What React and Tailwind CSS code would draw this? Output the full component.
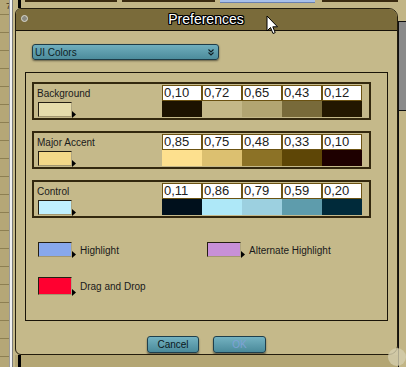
const rows = [
  {
    label: "Background",
    swatch: "bg-[#e6dcab]",
    values: [
      ["0,10", "bg-[#1c1200]"],
      ["0,72", "bg-[#c4b888]"],
      ["0,65", "bg-[#b2a572]"],
      ["0,43", "bg-[#786a3a]"],
      ["0,12", "bg-[#231700]"],
    ],
  },
  {
    label: "Major Accent",
    swatch: "bg-[#f3d888]",
    values: [
      ["0,85", "bg-[#fde08e]"],
      ["0,75", "bg-[#dcc070]"],
      ["0,48", "bg-[#8c7226]"],
      ["0,33", "bg-[#5e4606]"],
      ["0,10", "bg-[#1e0000]"],
    ],
  },
  {
    label: "Control",
    swatch: "bg-[#c0f0ff]",
    values: [
      ["0,11", "bg-[#00101c]"],
      ["0,86", "bg-[#aee8f8]"],
      ["0,79", "bg-[#9cd0e0]"],
      ["0,59", "bg-[#5e9cac]"],
      ["0,20", "bg-[#002a3a]"],
    ],
  },
];

const Arrow = () => (
  <svg width="4" height="7" viewBox="0 0 4 7" className="self-end -mb-[1px] shrink-0">
    <path d="M0 0 L4 3.5 L0 7 Z" fill="#000" />
  </svg>
);

const Swatch = ({ color, h = "h-[15px]" }) => (
  <div className="flex">
    <div
      className={`w-[34px] ${h} ${color} border-t border-l border-t-[#241e12] border-l-[#241e12] border-b border-r border-b-[#a39770] border-r-[#b0a680]`}
    />
    <Arrow />
  </div>
);

const ColorRow = ({ row }) => (
  <div className="w-[339px] h-[38px] border-2 border-[#33280e] flex">
    <div className="w-[128px] pl-[3px] pt-[4px]">
      <div className="text-[10px] leading-[12px] text-[#1a1a1a]">{row.label}</div>
      <div className="mt-[2px] ml-[1px]">
        <Swatch color={row.swatch} />
      </div>
    </div>
    <div className="pt-[1px] flex">
      {row.values.map(([v, c], i) => (
        <div key={i} className="w-[40px]">
          <div className="h-[16px] bg-white border border-[#6b5212] text-[13px] leading-[14px] pl-[1px] text-[#202020]">
            {v}
          </div>
          <div className={`h-[16px] ${c}`} />
        </div>
      ))}
    </div>
  </div>
);

const SwatchItem = ({ color, label, h }) => (
  <div className="flex items-center">
    <Swatch color={color} h={h} />
    <span className="ml-[4px] text-[10px] leading-[12px] text-[#1a1a1a] mt-[2px]">{label}</span>
  </div>
);

const Button = ({ children, w, text }) => (
  <button
    className={`${w} h-[17px] rounded-[3px] border border-[#1f3f4c] bg-gradient-to-b from-[#74b2c1] to-[#4a8a9a] shadow-[0_2px_2px_rgba(0,0,0,0.45)] text-[10px] leading-[15px] ${text}`}
  >
    {children}
  </button>
);

export default function App() {
  return (
    <div
      className="relative w-[406px] h-[367px] overflow-hidden bg-[#c2b586] flex"
      style={{ fontFamily: '"Liberation Sans", Arial, sans-serif' }}
    >
      {/* left background strip */}
      <div className="flex h-full">
        <div className="w-[9px] bg-[#b5a777] flex flex-col">
          <div className="h-[15px] shrink-0 border-b border-[#8d7f52] text-[9px] leading-[12px] text-[#3a3020] text-right -mr-[2px]">
            7
          </div>
          {Array.from({ length: 20 }).map((_, i) => (
            <div key={i} className="h-[18px] shrink-0 border-b border-[#8d7f52]" />
          ))}
        </div>
        <div className="w-[1px] bg-[#9a9a9a]" />
        <div className="w-[2px] bg-[#f2f2f2]" />
        <div className="w-[1px] bg-[#7a7a7a]" />
        <div className="w-[2px] bg-[#c4b888]" />
      </div>

      {/* middle column */}
      <div className="w-[383px] flex flex-col">
        <div className="h-[8px] flex relative bg-[#c2b586]">
          <div className="w-[3px] ml-[3px] bg-black" />
          <div className="w-[92px] ml-[4px] h-[2px] bg-[#3a2a10]" />
          <div className="w-[93px] ml-[5px] h-[2px] bg-[#3a2a10]" />
          <div className="w-[95px] ml-[5px] h-[3px] bg-[#a8c0ea] border-b border-[#6a80b0]" />
          <div className="w-[76px] ml-[7px] h-[2px] bg-[#3a2a10]" />
        </div>

        {/* dialog */}
        <div className="h-[347px] border border-[#231c0c] rounded-tl-[6px] rounded-tr-[9px] rounded-bl-[6px] rounded-br-[9px] bg-[#c5b98a] overflow-hidden flex flex-col">
          <div className="h-[22px] bg-[#7a6b3a] border-b border-[#161108] relative flex items-center justify-center">
            <div className="absolute left-[5px] top-[6px] w-[7px] h-[7px] rounded-full border-[1.5px] border-[#d8d8d0] bg-[#8a8a80]" />
            <span className="text-[14px] leading-[16px] text-white [text-shadow:-1px_0_0_#000,1px_0_0_#000,0_-1px_0_#000,0_1px_0_#000,1px_1px_0_#000,-1px_-1px_0_#000,1px_-1px_0_#000,-1px_1px_0_#000] -mt-[1px] ml-[-1px]">
              Preferences
            </span>
          </div>

          <div className="px-[9px]">
            <div className="mt-[13px] ml-[7px] w-[187px] h-[16px] rounded-[3px] border border-[#1e3c48] bg-gradient-to-b from-[#70aebd] to-[#4c8c9c] shadow-[0_1px_2px_rgba(0,0,0,0.5)] flex items-center justify-between pl-[2px] pr-[4px]">
              <span className="text-[10px] leading-[12px] text-[#0e1e24] mt-[2px]">UI Colors</span>
              <svg width="6" height="7" viewBox="0 0 6 7">
                <path d="M0.5 0.5 L3 3 L5.5 0.5 M0.5 3.5 L3 6 L5.5 3.5" stroke="#0e1e24" strokeWidth="1.1" fill="none" />
              </svg>
            </div>

            <div className="mt-[12px] w-[363px] h-[249px] border border-[#1a1408] pt-[9px] pl-[6px]">
              <div className="flex flex-col gap-[11px]">
                {rows.map((r) => (
                  <ColorRow key={r.label} row={r} />
                ))}
              </div>
              <div className="pl-[6px] mt-[24px] grid grid-cols-[169px_1fr]">
                <SwatchItem color="bg-[#88a8ec]" label="Highlight" />
                <SwatchItem color="bg-[#c890d8]" label="Alternate Highlight" />
              </div>
              <div className="pl-[6px] mt-[20px]">
                <SwatchItem color="bg-[#ff0030]" label="Drag and Drop" h="h-[18px]" />
              </div>
            </div>

            <div className="mt-[15px] flex justify-center gap-[14px]">
              <Button w="w-[52px]" text="text-[#0a1820]">Cancel</Button>
              <Button w="w-[53px]" text="text-[#7ea2d6]">OK</Button>
            </div>
          </div>
        </div>

        <div className="flex-1 flex bg-[#b4a674]">
          <div className="w-[3px] ml-[3px] bg-black" />
        </div>
      </div>

      {/* right background strip */}
      <div className="flex-1 flex flex-col">
        <div className="h-[21px] bg-[#c2b586]" />
        <div className="h-[90px] bg-[#8a8a8a] border-l border-t border-b border-[#111]" />
        <div className="flex-1 border-l border-[#111] bg-[#c2b586]" />
      </div>

      {/* resize grip shadow */}
      <div className="absolute left-[388px] top-[348px] w-[18px] h-[18px] rounded-full bg-[#d4ceae] opacity-80" />

      {/* mouse cursor */}
      <svg className="absolute left-[266px] top-[15px]" width="13" height="20" viewBox="0 0 13 20">
        <path
          d="M1 1 L1 16 L4.5 12.5 L7 18.5 L9.2 17.6 L6.8 11.8 L11.5 11.8 Z"
          fill="#fff"
          stroke="#000"
          strokeWidth="1"
          strokeLinejoin="round"
        />
      </svg>
    </div>
  );
}
